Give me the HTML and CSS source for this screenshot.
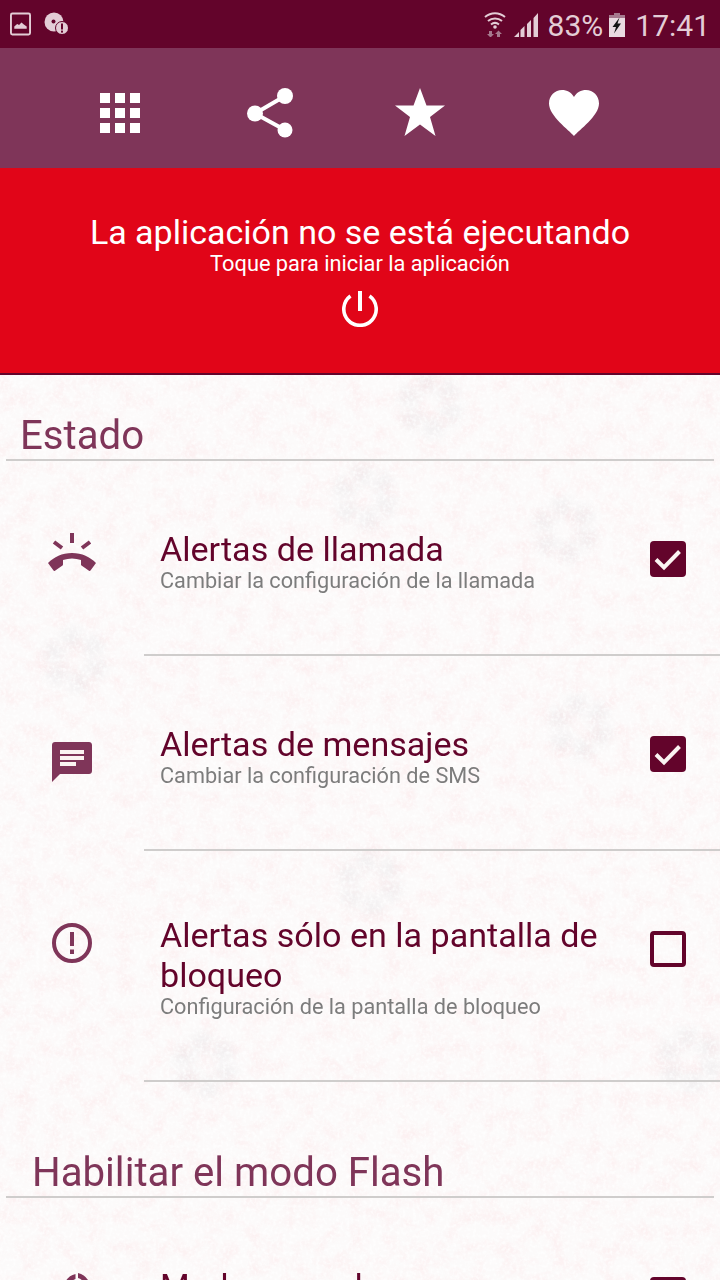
FILE: index.html
```html
<!DOCTYPE html>
<html lang="es">
<head>
<meta charset="utf-8">
<title>Alertas</title>
<link rel="stylesheet" href="styles.css">
</head>
<body>
<div class="screen">
  <header class="status">
    <div class="status-left">
      <svg class="ic-pic" viewBox="0 0 22 24"><rect x="1" y="1" width="20" height="22" rx="1.5" fill="none" stroke="#e3cdd6" stroke-width="2"/><path d="M4.500 17v-2.500l3-2.500 2 1 2.500-2.500 2.500 2 3 2V17z" fill="#e3cdd6"/></svg>
      <svg class="ic-disc" viewBox="0 0 24 22"><circle cx="10" cy="10" r="9.500" fill="#e3cdd6"/><circle cx="9.500" cy="9.500" r="2" fill="#63042b"/><circle cx="18" cy="16" r="6.500" fill="#e3cdd6" stroke="#63042b" stroke-width="1"/><rect x="17" y="11.500" width="2" height="6" fill="#63042b"/><rect x="17" y="18.600" width="2" height="2" fill="#63042b"/></svg>
    </div>
    <div class="status-right">
      <svg class="ic-wifi" viewBox="0 0 22 26"><g fill="none" stroke="#e3cdd6" stroke-width="2"><path d="M1 6c6-5 14-5 20 0"/><path d="M4 10c4-3.500 10-3.500 14 0"/><path d="M7 13.500c2.500-2 5.500-2 8 0"/></g><circle cx="11" cy="16" r="1.800" fill="#e3cdd6"/><path d="M5 20h3v3h2l-3.500 3.500L3 23h2zM14.500 19.500L18 23h-2v3.500h-3V23h-2z" fill="#a57a8e"/></svg>
      <svg class="ic-signal" viewBox="0 0 24 24"><path d="M0 24l5-5v5zM6.500 24v-7l4-4v11zM13 24V11l4-4v17zM19.500 24V5L24 0v24z" fill="#e3cdd6"/></svg>
      <span class="pct">83%</span>
      <svg class="ic-batt" viewBox="0 0 16 24"><path d="M5 0h6v2h5v5H0V2h5z" fill="#a57a8e"/><rect y="5" width="16" height="19" fill="#e9dbe1"/><path d="M10.500 4.500L3.500 14h3.500l-2 6.500 7-10H8.500z" fill="#151515"/></svg>
      <span class="clock">17:41</span>
    </div>
  </header>

  <nav class="toolbar">
    <svg class="ic-grid" viewBox="0 0 40 40" fill="#fff"><rect width="10" height="10"/><rect x="15" width="10" height="10"/><rect x="30" width="10" height="10"/><rect y="15" width="10" height="10"/><rect x="15" y="15" width="10" height="10"/><rect x="30" y="15" width="10" height="10"/><rect y="30" width="10" height="10"/><rect x="15" y="30" width="10" height="10"/><rect x="30" y="30" width="10" height="10"/></svg>
    <svg class="ic-share" viewBox="0 0 46 50"><path d="M38 8L8 25.500l30 16.500" fill="none" stroke="#fff" stroke-width="4"/><circle cx="38" cy="8" r="8" fill="#fff"/><circle cx="8" cy="25.500" r="8" fill="#fff"/><circle cx="38" cy="42" r="7.500" fill="#fff"/></svg>
    <svg class="ic-star" viewBox="0 0 50 48"><path d="M25 0l6.500 17.500H50L35 29l5.500 19L25 36.500 9.500 48 15 29 0 17.500h18.500z" fill="#fff"/></svg>
    <svg class="ic-heart" viewBox="0 0 50 46"><path d="M25 46C20 40 0 26 0 13.500 0 5.500 6 0 13 0c5 0 9.500 2.500 12 7 2.500-4.500 7-7 12-7 7 0 13 5.500 13 13.500C50 26 30 40 25 46z" fill="#fff"/></svg>
  </nav>

  <section class="banner">
    <div class="banner-title">La aplicación no se está ejecutando</div>
    <div class="banner-sub">Toque para iniciar la aplicación</div>
    <svg class="ic-power" viewBox="0 0 36 36"><path d="M8.500 5A16.200 16.200 0 1 0 27.500 5" fill="none" stroke="#fff" stroke-width="3.600"/><rect x="16" y="0" width="4" height="20" fill="#fff"/></svg>
  </section>

  <main class="content">
    <svg class="paper" width="720" height="906" aria-hidden="true">
      <defs>
        <filter id="mottle" x="0" y="0" width="100%" height="100%">
          <feTurbulence type="fractalNoise" baseFrequency="0.06" numOctaves="4" seed="11"/>
          <feColorMatrix type="matrix" values="0 0 0 0 0.98  0 0 0 0 0.74  0 0 0 0 0.76  2 0 0 0 -0.8"/>
        </filter>
        <filter id="grain" x="0" y="0" width="100%" height="100%">
          <feTurbulence type="fractalNoise" baseFrequency="0.3" numOctaves="2" seed="3"/>
          <feColorMatrix type="matrix" values="0 0 0 0 1  0 0 0 0 1  0 0 0 0 1  2.5 0 0 0 -1"/>
        </filter>
        <filter id="soft"><feGaussianBlur stdDeviation="4"/></filter>
        <g id="flower">
          <circle r="22" fill="none" stroke="#bfbdc4" stroke-width="20" stroke-dasharray="16 7"/>
        </g>
      </defs>
      <rect width="720" height="906" fill="#fcfafa"/>
      <rect width="720" height="906" filter="url(#mottle)" opacity="0.38"/>
      <g filter="url(#soft)" opacity="0.14">
        <use href="#flower" x="430" y="30"/>
        <use href="#flower" x="365" y="122"/>
        <use href="#flower" x="565" y="155"/>
        <use href="#flower" x="75" y="285"/>
        <use href="#flower" x="580" y="352"/>
        <use href="#flower" x="370" y="508"/>
        <use href="#flower" x="690" y="685"/>
        <use href="#flower" x="205" y="690"/>
      </g>
      <rect width="720" height="906" filter="url(#grain)" opacity="0.7"/>
    </svg>

    <div class="group-head"><h2 class="group-title">Estado</h2></div>

    <div class="row">
      <div class="row-icon">
        <svg class="ic-call" viewBox="0 0 48 38"><path d="M24 0v10M6 9l8 6M42 9l-8 6" fill="none" stroke="#7f3559" stroke-width="4"/><path d="M0 30c6-6 14-10 24-10s18 4 24 10l-5.500 7.500c-.5.500-1 .5-1.500.2l-7.500-5.200c-.5-.5-.5-.8-.5-1.500v-4c-6-2-12-2-18 0v4c0 .7 0 1-.5 1.500L7 37.700c-.5.300-1 .3-1.500-.2z" fill="#7f3559"/></svg>
      </div>
      <div class="row-text">
        <div class="row-title">Alertas de llamada</div>
        <div class="row-sub">Cambiar la configuración de la llamada</div>
      </div>
      <div class="check on"><svg viewBox="0 0 36 36"><path d="M6 18.500l8 8L29.500 10.500" fill="none" stroke="#fbf4f2" stroke-width="4"/></svg></div>
    </div>

    <div class="row">
      <div class="row-icon">
        <svg class="ic-msg" viewBox="0 0 40 40"><path d="M3 0h34c1.700 0 3 1.300 3 3v26c0 1.700-1.300 3-3 3H8l-8 8V3c0-1.700 1.300-3 3-3z" fill="#7f3559"/><path d="M8 8h24v4H8zM8 14h24v4H8zM8 20h16v4H8z" fill="#fbf4f2"/></svg>
      </div>
      <div class="row-text">
        <div class="row-title">Alertas de mensajes</div>
        <div class="row-sub">Cambiar la configuración de SMS</div>
      </div>
      <div class="check on"><svg viewBox="0 0 36 36"><path d="M6 18.500l8 8L29.500 10.500" fill="none" stroke="#fbf4f2" stroke-width="4"/></svg></div>
    </div>

    <div class="row row-tall">
      <div class="row-icon">
        <svg class="ic-alert" viewBox="0 0 40 40"><circle cx="20" cy="20" r="18" fill="none" stroke="#7f3559" stroke-width="4"/><rect x="18" y="9" width="4" height="14" fill="#7f3559"/><rect x="18" y="26.500" width="4" height="4.500" fill="#7f3559"/></svg>
      </div>
      <div class="row-text">
        <div class="row-title">Alertas sólo en la pantalla de bloqueo</div>
        <div class="row-sub">Configuración de la pantalla de bloqueo</div>
      </div>
      <div class="check"></div>
    </div>

    <div class="group-head group-second"><h2 class="group-title">Habilitar el modo Flash</h2></div>

    <div class="row row-last">
      <div class="row-icon">
        <svg class="ic-mode" viewBox="0 0 40 40"><path d="M9 7.500A15 15 0 0 1 18.500 1v5a11 11 0 0 0-6.500 5zM21 0A16 16 0 0 1 31 7l-3.500 3.500A11 11 0 0 0 21 5z" fill="#7f3559"/></svg>
      </div>
      <div class="row-text">
        <div class="row-title">Modo normal</div>
      </div>
      <div class="check on"></div>
    </div>
  </main>
</div>
</body>
</html>
```

FILE: styles.css
```css
* { box-sizing: border-box; margin: 0; padding: 0; }
html, body { width: 720px; height: 1280px; overflow: hidden; }
body { font-family: Roboto, "Noto Sans", sans-serif; background: #fdfbfa; }
svg { display: block; flex: none; }
.screen { width: 720px; height: 1280px; display: flex; flex-direction: column; overflow: hidden; }

.status { height: 48px; flex: none; background: #63042b; display: flex; justify-content: space-between; align-items: center; color: #e3cdd6; }
.status-left { display: flex; align-items: center; gap: 13px; padding-left: 10px; }
.ic-pic { width: 21px; height: 24px; }
.ic-disc { width: 24px; height: 22px; margin-top: -3px; }
.status-right { display: flex; align-items: center; padding-right: 10px; }
.ic-wifi { width: 22px; height: 26px; margin-right: 8px; }
.ic-signal { width: 24px; height: 24px; margin-right: 10px; margin-top: 2px; }
.pct { font-size: 30px; line-height: 48px; margin-right: 6px; margin-top: 4px; }
.ic-batt { width: 16px; height: 24px; margin-right: 10px; margin-top: 2px; }
.clock { font-size: 30px; line-height: 48px; margin-top: 4px; }

.toolbar { height: 120px; flex: none; background: #7f3559; display: flex; align-items: center; padding: 10px 0 0 100px; }
.ic-grid { width: 40px; height: 40px; }
.ic-share { width: 46px; height: 50px; margin-left: 107px; }
.ic-star { width: 50px; height: 48px; margin-left: 102px; margin-top: -2px; }
.ic-heart { width: 50px; height: 46px; margin-left: 104px; }

.banner { height: 207px; flex: none; background: #e10518; border-bottom: 2px solid #63042b; display: flex; flex-direction: column; align-items: center; color: #fff; padding-top: 44px; }
.banner-title { font-size: 34px; line-height: 40px; }
.banner-sub { font-size: 21.8px; line-height: 24px; }
.ic-power { width: 36px; height: 36px; margin-top: 15px; }

.content { position: relative; flex: 1; overflow: hidden; }
.paper { position: absolute; left: 0; top: 0; }
.group-head { position: relative; height: 86px; margin: 0 6px; border-bottom: 2px solid #cfcdcc; padding-left: 14px; padding-top: 37px; }
.group-title { font-size: 40.2px; line-height: 48px; font-weight: 400; color: #7f3559; }
.group-second { height: 116px; padding-left: 26px; padding-top: 67px; }

.row { position: relative; height: 195px; display: flex; align-items: flex-start; padding-top: 68px; }
.row::after { content: ""; position: absolute; left: 144px; right: 0; bottom: 0; height: 2px; background: #cfcdcc; }
.row-tall { height: 231px; padding-top: 64px; }
.row-last::after { display: none; }
.row-icon { width: 160px; flex: none; display: flex; justify-content: center; padding-right: 16px; }
.row-text { width: 470px; flex: none; }
.row-title { font-size: 34.1px; line-height: 40px; color: #63042b; }
.row-sub { font-size: 21.7px; line-height: 24px; color: #7c7c7c; }
.check { width: 36px; height: 36px; margin-left: 20px; border: 4px solid #63042b; border-radius: 4px; margin-top: 12px; }
.check.on { background: #63042b; border: 0; }
.row-tall .check { margin-top: 16px; }
.row-last .check { margin-top: 11px; }
.ic-call { width: 48px; height: 38px; margin-top: 4px; }
.ic-msg { width: 40px; height: 40px; margin-top: 18px; }
.ic-alert { width: 40px; height: 40px; margin-top: 8px; }
.ic-mode { width: 40px; height: 40px; margin-top: 7px; margin-left: 10px; }
```
